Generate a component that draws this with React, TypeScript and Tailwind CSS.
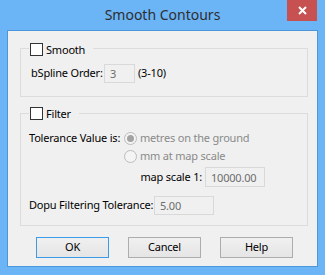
import React from "react";

function Checkbox() {
  return <span className="inline-block w-[13px] h-[13px] border border-[#333333] bg-white shrink-0" />;
}

function Radio({ checked }: { checked?: boolean }) {
  return (
    <span className="w-[13px] h-[13px] rounded-full border border-[#bcbcbc] bg-[#f4f4f4] flex items-center justify-center shrink-0">
      {checked && <span className="w-[7px] h-[7px] rounded-full bg-[#a3a3a3]" />}
    </span>
  );
}

function Input({ value, w, h }: { value: string; w: string; h: string }) {
  return (
    <div className={`${w} ${h} shrink-0 border border-[#d9d9d9] bg-[#f0f0f0] text-[#6d6d6d] pl-[5px] flex items-center leading-none`}>
      {value}
    </div>
  );
}

function Button({ label, def }: { label: string; def?: boolean }) {
  return (
    <div
      className={`w-[73px] h-[21px] flex items-center justify-center border bg-gradient-to-b from-[#f0f0f0] to-[#e5e5e5] ${
        def ? "border-[#3c9be8]" : "border-[#adadad]"
      }`}
    >
      {label}
    </div>
  );
}

export default function App() {
  return (
    <div
      className="w-[325px] h-[275px] bg-[#6bb4f6] flex flex-col px-[7px] pb-[8px] text-[11px] text-black whitespace-nowrap tracking-[-0.2px]"
      style={{ fontFamily: '"Noto Sans", "Segoe UI", sans-serif' }}
    >
      <div className="h-[30px] relative flex items-center justify-center shrink-0">
        <span className="text-[14px] text-[#2e2e2e] mt-[-1px] tracking-normal">Smooth Contours</span>
        <div className="absolute top-0 right-[1px] w-[30px] h-[21px] bg-[#c75050] flex items-center justify-center">
          <svg width="9" height="9" viewBox="0 0 9 9">
            <path d="M1 1 L8 8 M8 1 L1 8" stroke="white" strokeWidth="2" />
          </svg>
        </div>
      </div>
      <div className="flex-1 border border-[#4b97dc] bg-[#f0f0f0] flex flex-col">
        {/* Group 1 */}
        <div className="relative ml-[12px] mr-[9px] mt-[17px] h-[49px] border border-[#dcdcdc] flex flex-col">
          <div className="absolute top-[-6px] left-[8px] bg-[#f0f0f0] pl-[1px] pr-[8px] flex items-center gap-[3px] h-[13px]">
            <Checkbox />
            <span className="leading-none">Smooth</span>
          </div>
          <div className="mt-[15px] ml-[10px] flex items-center">
            <span className="w-[73px] shrink-0">bSpline Order:</span>
            <Input value="3" w="w-[31px]" h="h-[19px]" />
            <span className="ml-[3px]">(3-10)</span>
          </div>
        </div>

        {/* Group 2 */}
        <div className="relative ml-[12px] mr-[9px] mt-[16px] h-[113px] border border-[#dcdcdc] flex flex-col">
          <div className="absolute top-[-7px] left-[8px] bg-[#f0f0f0] pl-[1px] pr-[8px] flex items-center gap-[3px] h-[13px]">
            <Checkbox />
            <span className="leading-none">Filter</span>
          </div>
          <div className="mt-[18px] ml-[8px] flex items-center h-[13px]">
            <span className="w-[95px] shrink-0">Tolerance Value is:</span>
            <Radio checked />
            <span className="ml-[3px] text-[#8a8a8a]">metres on the ground</span>
          </div>
          <div className="mt-[5px] ml-[103px] flex items-center h-[13px]">
            <Radio />
            <span className="ml-[3px] text-[#8a8a8a]">mm at map scale</span>
          </div>
          <div className="mt-[4px] flex items-center h-[20px]">
            <span className="w-[184px] shrink-0 text-right pr-[3px]">map scale 1:</span>
            <Input value="10000.00" w="w-[60px]" h="h-[20px]" />
          </div>
          <div className="mt-[9px] ml-[8px] flex items-center h-[19px]">
            <span className="w-[125px] shrink-0">Dopu Filtering Tolerance:</span>
            <Input value="5.00" w="w-[60px]" h="h-[19px]" />
          </div>
        </div>

        <div className="mt-[11px] flex ml-[28px] gap-[19px]">
          <Button label="OK" def />
          <Button label="Cancel" />
          <Button label="Help" />
        </div>
      </div>
    </div>
  );
}
